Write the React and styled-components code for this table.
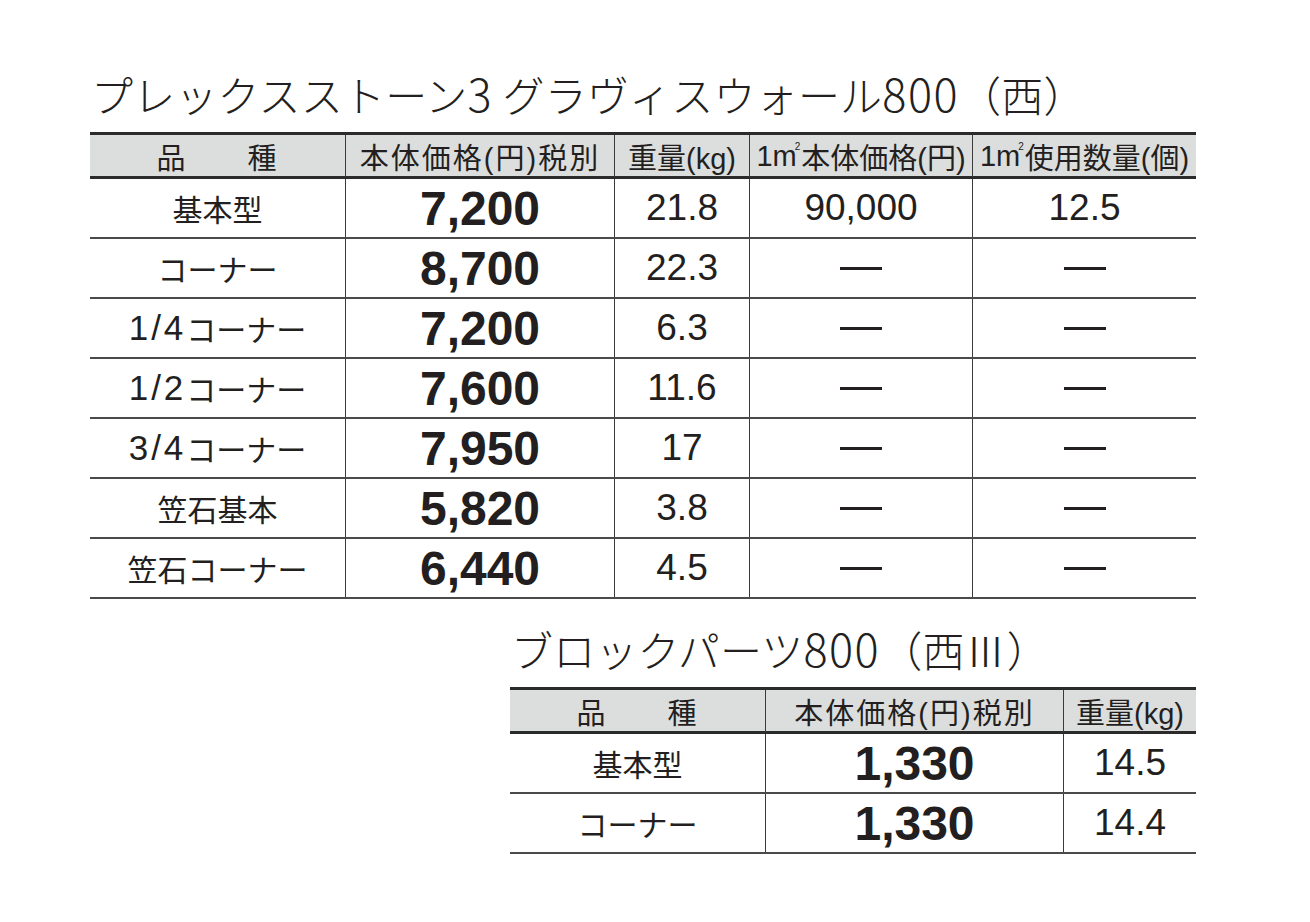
import React from "react";
import styled, { createGlobalStyle } from "styled-components";

const GlobalStyle = createGlobalStyle`
  body {
    margin: 0;
    background: #ffffff;
    color: #231f20;
    font-family: "Liberation Sans", "Noto Sans CJK JP", sans-serif;
  }
`;

const Page = styled.div`
  width: 1310px;
  height: 922px;
  padding: 68px 0 0 90px;
  box-sizing: border-box;
  display: flex;
  flex-direction: column;
`;

const Section = styled.section`
  display: flex;
  flex-direction: column;
  width: ${(props) => props.width}px;
  align-self: ${(props) => (props.right ? "flex-end" : "flex-start")};
  margin-right: ${(props) => (props.right ? 114 : 0)}px;
  margin-top: ${(props) => props.top || 0}px;
`;

const Title = styled.h2`
  margin: 0 0 14px 1px;
  height: 50px;
  line-height: 50px;
  font-family: "Noto Sans CJK JP", sans-serif;
  font-weight: 300;
  font-size: 42px;
  letter-spacing: 0.2px;
  color: #231f20;
  white-space: nowrap;
`;

const TitleNum = styled.span`
  font-size: 45px;
  letter-spacing: 1.5px;
`;

const Table = styled.div`
  display: flex;
  flex-direction: column;
  border-top: 3px solid #2b2b2b;
`;

const Row = styled.div`
  display: grid;
  grid-template-columns: ${(props) => props.cols};
  height: ${(props) => (props.head ? 41 : 58)}px;
  background: ${(props) => (props.head ? "#dcdddd" : "transparent")};
  border-bottom: ${(props) => (props.head ? "3px solid #2b2b2b" : "2px solid #4a4a4a")};
`;

const Cell = styled.div`
  display: flex;
  align-items: center;
  justify-content: center;
  white-space: nowrap;
  border-left: ${(props) => (props.first ? "none" : "1.5px solid #3a3a3a")};
  color: #231f20;
`;

const HeadCell = styled(Cell)`
  font-size: 29px;
  letter-spacing: ${(props) => (props.tight ? 0 : 2)}px;
`;

const LabelCell = styled(Cell)`
  font-size: 30px;
`;

const Fraction = styled.span`
  font-size: 35px;
  letter-spacing: 3px;
`;

const PriceCell = styled(Cell)`
  font-size: 48px;
  font-weight: 700;
`;

const ValueCell = styled(Cell)`
  font-size: 37px;
`;

const Dash = styled.span`
  display: inline-block;
  width: 42px;
  height: 3px;
  background: #231f20;
`;

const Sup = styled.span`
  font-size: 10px;
  align-self: flex-start;
  margin: 6px 1px 0 -2px;
`;

const Spaced = styled.span`
  display: flex;
  justify-content: space-between;
  width: 122px;
`;

const mainRows = [
  [null, "基本型", "7,200", "21.8", "90,000", "12.5"],
  [null, "コーナー", "8,700", "22.3", null, null],
  ["1/4", "コーナー", "7,200", "6.3", null, null],
  ["1/2", "コーナー", "7,600", "11.6", null, null],
  ["3/4", "コーナー", "7,950", "17", null, null],
  [null, "笠石基本", "5,820", "3.8", null, null],
  [null, "笠石コーナー", "6,440", "4.5", null, null],
];

const partRows = [
  ["基本型", "1,330", "14.5"],
  ["コーナー", "1,330", "14.4"],
];

const mainCols = "255px 269px 135px 223px 224px";
const partCols = "255px 298px 133px";

const Kind = () => (
  <Spaced>
    <span>品</span>
    <span>種</span>
  </Spaced>
);

const App = () => {
  return (
    <>
      <GlobalStyle />
      <Page>
        <Section width={1106}>
          <Title>
            プレックスストーン<TitleNum>3</TitleNum> グラヴィスウォール<TitleNum>800</TitleNum>（西）
          </Title>
          <Table>
            <Row head cols={mainCols}>
              <HeadCell first><Kind /></HeadCell>
              <HeadCell>本体価格(円)税別</HeadCell>
              <HeadCell tight>重量(kg)</HeadCell>
              <HeadCell tight>1m<Sup>2</Sup>本体価格(円)</HeadCell>
              <HeadCell tight>1m<Sup>2</Sup>使用数量(個)</HeadCell>
            </Row>
            {mainRows.map((r, i) => (
              <Row key={i} cols={mainCols}>
                <LabelCell first>
                  {r[0] && <Fraction>{r[0]}</Fraction>}
                  {r[1]}
                </LabelCell>
                <PriceCell>{r[2]}</PriceCell>
                <ValueCell>{r[3]}</ValueCell>
                <ValueCell>{r[4] || <Dash />}</ValueCell>
                <ValueCell>{r[5] || <Dash />}</ValueCell>
              </Row>
            ))}
          </Table>
        </Section>

        <Section width={686} right top={24}>
          <Title>
            ブロックパーツ<TitleNum>800</TitleNum>（西Ⅲ）
          </Title>
          <Table>
            <Row head cols={partCols}>
              <HeadCell first><Kind /></HeadCell>
              <HeadCell>本体価格(円)税別</HeadCell>
              <HeadCell tight>重量(kg)</HeadCell>
            </Row>
            {partRows.map((r, i) => (
              <Row key={i} cols={partCols}>
                <LabelCell first>{r[0]}</LabelCell>
                <PriceCell>{r[1]}</PriceCell>
                <ValueCell>{r[2]}</ValueCell>
              </Row>
            ))}
          </Table>
        </Section>
      </Page>
    </>
  );
};

export default App;
